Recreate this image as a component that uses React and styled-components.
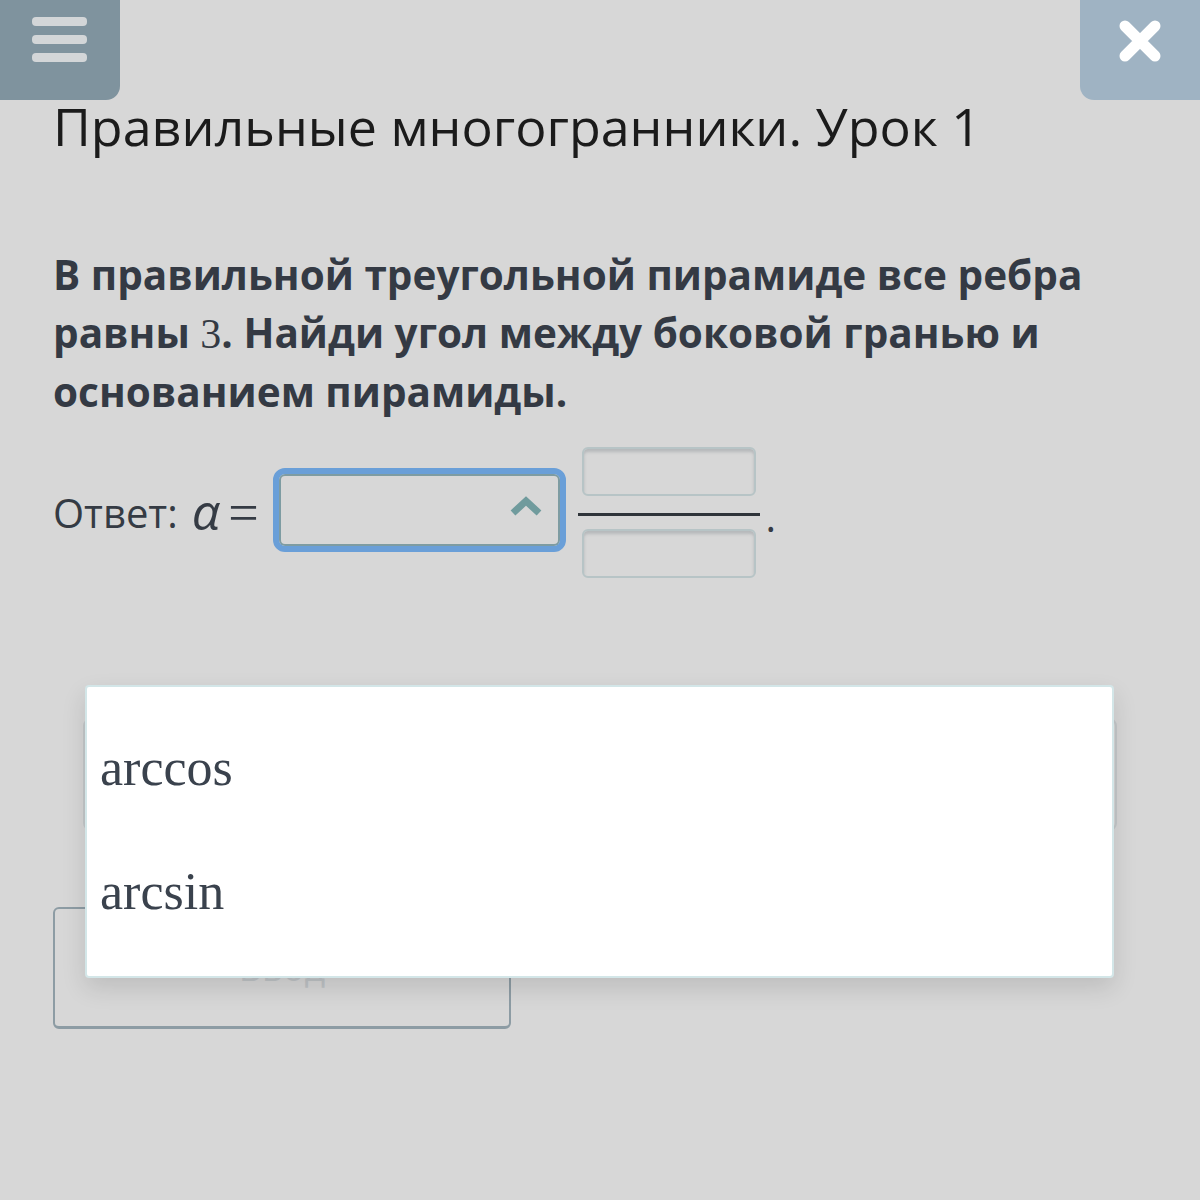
import React from 'react';
import styled, { createGlobalStyle } from 'styled-components';

const GlobalStyle = createGlobalStyle`
  html, body {
    margin: 0;
    padding: 0;
    background: #d7d7d7;
  }
  body {
    font-family: 'Open Sans', 'Noto Sans', sans-serif;
    color: #353b44;
  }
`;

const options = ['arccos', 'arcsin'];

const App = () => {
  return (
    <Page>
      <GlobalStyle />
      <MenuButton aria-label='menu'>
        <span />
        <span />
        <span />
      </MenuButton>
      <CloseButton aria-label='close'>
        <svg width='44' height='44' viewBox='0 0 44 44'>
          <path
            d='M7 7 L37 37 M37 7 L7 37'
            stroke='#ffffff'
            strokeWidth='11'
            strokeLinecap='round'
          />
        </svg>
      </CloseButton>

      <Title>Правильные многогранники. Урок 1</Title>

      <Question>
        В правильной треугольной пирамиде все ребра равны <MathNum>3</MathNum>. Найди угол между
        боковой гранью и основанием пирамиды.
      </Question>

      <AnswerRow>
        <AnswerLabel>Ответ:</AnswerLabel>
        <Alpha>α</Alpha>
        <Equals>=</Equals>
        <Select>
          <svg width='36' height='22' viewBox='0 0 36 22'>
            <path
              d='M5 17 L18 5 L31 17'
              fill='none'
              stroke='#709b9d'
              strokeWidth='7'
              strokeLinejoin='miter'
            />
          </svg>
        </Select>
        <Fraction>
          <FracBox />
          <FracLine />
          <FracBox />
        </Fraction>
        <Dot>.</Dot>
      </AnswerRow>

      <Lower>
        <GhostCard />
        <SubmitButton>Ввод</SubmitButton>
      </Lower>

      <Dropdown>
        {options.map((o) => (
          <Option key={o}>{o}</Option>
        ))}
      </Dropdown>
    </Page>
  );
};

const Page = styled.div`
  position: relative;
  min-height: 1200px;
  padding: 90px 53px 0 53px;
  box-sizing: border-box;
`;

const MenuButton = styled.div`
  position: absolute;
  top: 0;
  left: 0;
  width: 120px;
  height: 100px;
  background: #7f939e;
  border-bottom-right-radius: 14px;
  display: flex;
  flex-direction: column;
  gap: 9px;
  padding: 17px 0 0 32px;
  box-sizing: border-box;

  span {
    display: block;
    width: 55px;
    height: 9px;
    border-radius: 4px;
    background: #d3d6d8;
  }
`;

const CloseButton = styled.div`
  position: absolute;
  top: 0;
  right: 0;
  width: 120px;
  height: 100px;
  background: #9fb3c3;
  border-bottom-left-radius: 14px;
  display: flex;
  align-items: flex-start;
  justify-content: center;
  padding: 19px 0 0 0;
  box-sizing: border-box;
`;

const Title = styled.h1`
  margin: 0;
  font-size: 52px;
  font-weight: 400;
  line-height: 71px;
  color: #1b1b1b;
`;

const Question = styled.p`
  margin: 85px 0 0 0;
  font-size: 40.5px;
  font-weight: 700;
  line-height: 58px;
  color: #343a44;
  max-width: 1080px;
`;

const MathNum = styled.span`
  font-family: 'Liberation Serif', 'DejaVu Serif', serif;
  font-weight: 400;
  font-size: 42px;
`;

const AnswerRow = styled.div`
  display: flex;
  align-items: center;
  margin-top: 26px;
  height: 131px;
`;

const AnswerLabel = styled.span`
  font-size: 40px;
  color: #353b44;
  margin-right: 14px;
`;

const Alpha = styled.span`
  font-size: 50px;
  font-style: italic;
  color: #353b44;
  margin-right: 8px;
  padding-bottom: 4px;
`;

const Equals = styled.span`
  font-family: 'Liberation Serif', 'DejaVu Serif', serif;
  font-size: 54px;
  color: #353b44;
  margin-right: 14px;
`;

const Select = styled.div`
  width: 293px;
  height: 84px;
  margin-bottom: 6px;
  box-sizing: border-box;
  border: 6px solid #6a9fd8;
  border-radius: 12px;
  box-shadow: inset 0 0 0 2px #7e9ca2;
  display: flex;
  align-items: center;
  justify-content: flex-end;
  padding: 0 16px 6px 0;
`;

const Fraction = styled.div`
  display: flex;
  flex-direction: column;
  align-items: center;
  margin-left: 12px;
  width: 182px;
`;

const FracBox = styled.div`
  width: 174px;
  height: 49px;
  box-sizing: border-box;
  border: 2px solid #b7c4c6;
  border-radius: 6px;
  box-shadow: inset 0 3px 3px rgba(120, 130, 135, 0.35);
`;

const FracLine = styled.div`
  width: 182px;
  height: 3px;
  background: #2f343a;
  margin: 17px 0 13px 0;
`;

const Dot = styled.span`
  font-size: 40px;
  color: #353b44;
  margin-left: 6px;
  align-self: center;
  padding-top: 8px;
`;

const Lower = styled.div`
  display: flex;
  flex-direction: column;
  align-items: flex-start;
  margin-top: 140px;
`;

const GhostCard = styled.div`
  width: 1034px;
  height: 113px;
  margin-left: 30px;
  border: 2px solid #c4c8ca;
  border-radius: 8px;
  box-sizing: border-box;
`;

const SubmitButton = styled.div`
  margin-top: 76px;
  width: 458px;
  height: 122px;
  box-sizing: border-box;
  border: 2px solid #8d9ca4;
  border-bottom-width: 3px;
  border-radius: 6px;
  display: flex;
  align-items: center;
  justify-content: center;
  font-size: 36px;
  color: #bfc3c6;
`;

const Dropdown = styled.div`
  position: absolute;
  left: 85px;
  top: 685px;
  width: 1029px;
  height: 293px;
  box-sizing: border-box;
  background: #ffffff;
  border: 2px solid #d3e6e8;
  border-radius: 4px;
  box-shadow: 0 10px 24px rgba(0, 0, 0, 0.12);
  display: flex;
  flex-direction: column;
  padding-top: 18px;
`;

const Option = styled.div`
  height: 124px;
  display: flex;
  align-items: center;
  padding-left: 13px;
  font-family: 'Liberation Serif', 'DejaVu Serif', serif;
  font-size: 52px;
  color: #3a424d;
`;

export default App;
